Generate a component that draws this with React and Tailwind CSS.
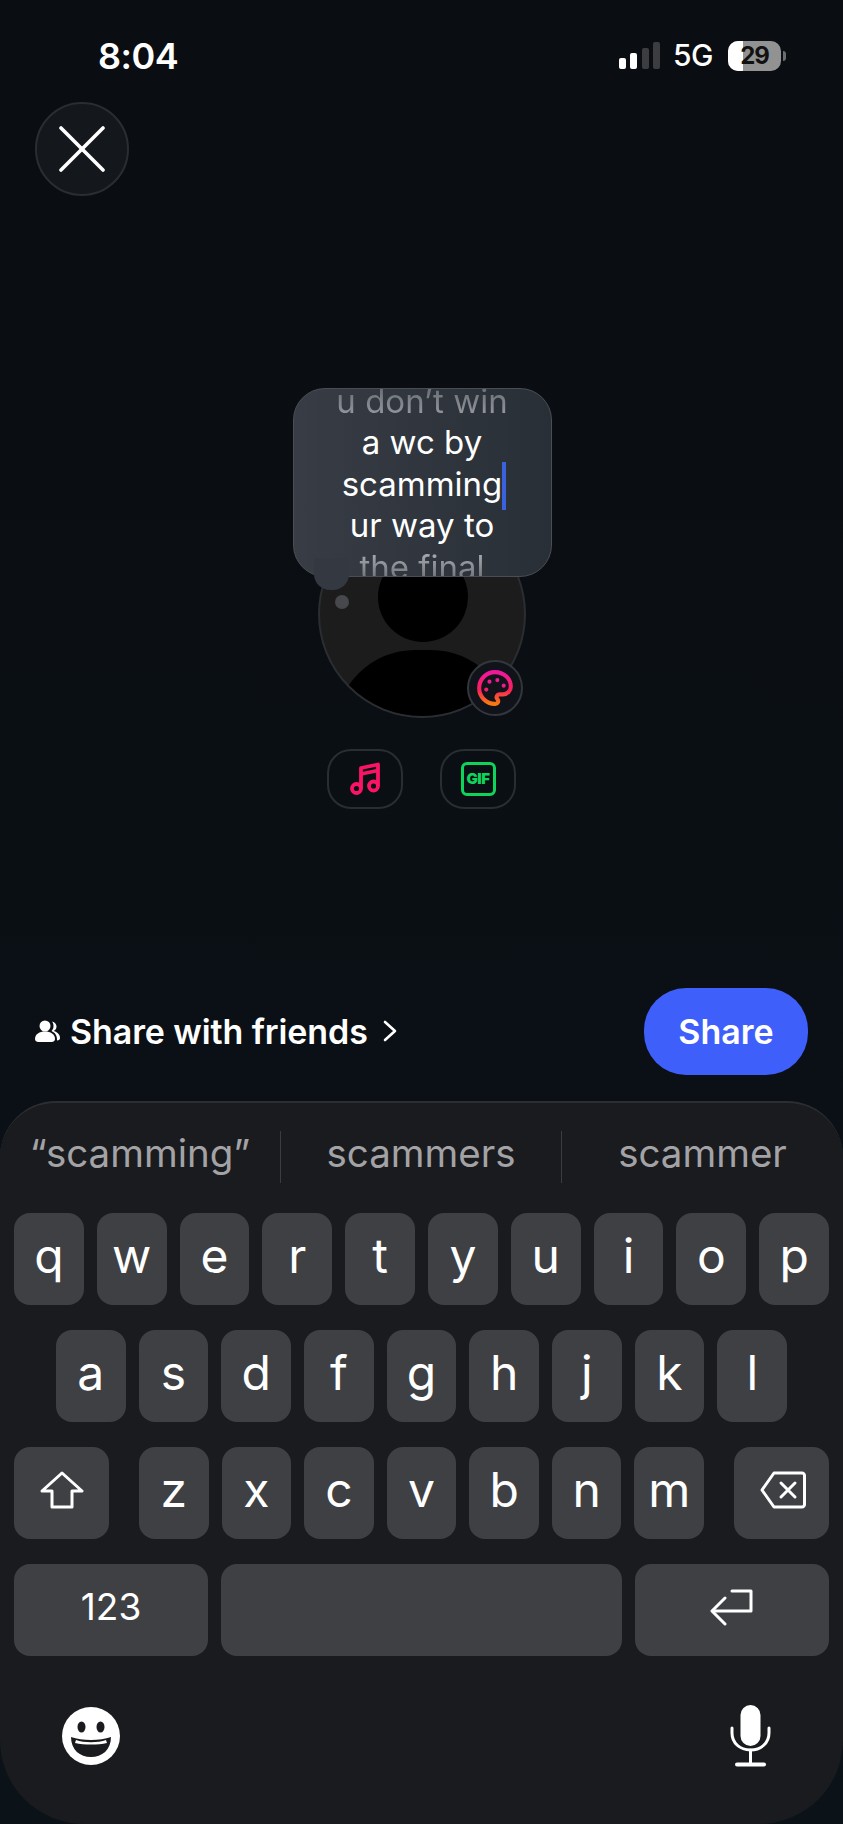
const rowOne = ["q", "w", "e", "r", "t", "y", "u", "i", "o", "p"];
const rowTwo = ["a", "s", "d", "f", "g", "h", "j", "k", "l"];
const rowThree = ["z", "x", "c", "v", "b", "n", "m"];

const Key = ({ children, className = "" }) => (
  <div
    className={`h-[92px] rounded-[16px] bg-[#3f4043] flex items-center justify-center text-white text-[48px] leading-none pb-[6px] ${className}`}
  >
    {children}
  </div>
);

const StatusBar = () => (
  <div className="h-[102px] pt-[10px] pl-[98px] pr-[57px] flex items-center justify-between text-white">
    <span className="text-[36px] font-semibold tracking-[-0.5px]">8:04</span>
    <div className="flex items-center">
      <div className="flex items-end gap-[4.5px] h-[27px]">
        <div className="w-[7px] h-[11px] rounded-[2px] bg-white" />
        <div className="w-[7px] h-[16px] rounded-[2px] bg-white" />
        <div className="w-[7px] h-[21px] rounded-[2px] bg-[#3b3d41]" />
        <div className="w-[7px] h-[27px] rounded-[2px] bg-[#3b3d41]" />
      </div>
      <span className="ml-[13px] text-[30px] font-medium tracking-[-0.5px]">5G</span>
      <div className="ml-[15px] relative w-[53px] h-[30px] rounded-[10px] overflow-hidden bg-[#929292] flex items-center justify-center">
        <div className="absolute left-0 top-0 bottom-0 w-[15px] bg-white" />
        <span className="relative text-[24px] font-bold text-[#111] tracking-[-1px]">29</span>
      </div>
      <div className="ml-[2px] w-[3px] h-[10px] rounded-r-full bg-[#6d6d6d]" />
    </div>
  </div>
);

const CloseButton = () => (
  <button className="ml-[35px] w-[94px] h-[94px] rounded-full bg-[#14171c] border-2 border-[#2a2d31] flex items-center justify-center">
    <svg width="46" height="46" viewBox="0 0 46 46" fill="none" stroke="white" strokeWidth="3.6" strokeLinecap="round">
      <path d="M2 2 L44 44" />
      <path d="M44 2 L2 44" />
    </svg>
  </button>
);

const Bubble = () => (
  <div className="absolute top-[-122px] left-[-25px] w-[259px] h-[189px]">
    <div className="relative w-full h-full pt-[4px] rounded-[32px] border border-[#4a4e54] bg-gradient-to-r from-[#383d45] to-[#292f36] overflow-hidden flex flex-col items-center justify-center text-white text-[33px] leading-[41.5px]">
      <span className="shrink-0 text-transparent bg-clip-text bg-gradient-to-b from-[#5f636a] to-[#a0a4aa]">u don’t win</span>
      <span className="shrink-0">a wc by</span>
      <span className="shrink-0 relative">
        scamming
        <span className="absolute right-[-4px] top-[-2px] w-[4px] h-[48px] bg-[#3a62dc]" />
      </span>
      <span className="shrink-0">ur way to</span>
      <span className="shrink-0 text-transparent bg-clip-text bg-gradient-to-b from-[#b4b7bb] to-[#5f636a]">the final</span>
    </div>
    {/* tail sits on top so the bubble's bottom border doesn't cut through it */}
    <div className="absolute left-[21px] bottom-[-13px] w-[35px] h-[32px] rounded-b-[16px] bg-[#343941]" />
  </div>
);

const Avatar = () => (
  <div className="relative w-[208px] h-[208px] mt-[314px]">
    <div className="w-full h-full rounded-full bg-[#1c1c1c] border-2 border-[#2a2d31] overflow-hidden relative">
      <div className="absolute left-[58px] top-[40px] w-[90px] h-[90px] rounded-full bg-black" />
      <div className="absolute left-[15px] top-[138px] w-[176px] h-[160px] rounded-full bg-black" />
    </div>
    <Bubble />
    <div className="absolute left-[17px] top-[85px] w-[14px] h-[14px] rounded-full bg-[#46484b]" />
    <div className="absolute left-[149px] top-[150px] w-[56px] h-[56px] rounded-full bg-[#10141a] border-2 border-[#33363b] flex items-center justify-center">
      <svg width="38" height="38" viewBox="0 0 24 24" fill="none" stroke="url(#paletteStroke)" strokeWidth="2.6" strokeLinecap="round" strokeLinejoin="round">
        <defs>
          <linearGradient id="paletteStroke" x1="0" y1="0" x2="0" y2="1">
            <stop offset="0" stopColor="#f0189a" />
            <stop offset="0.55" stopColor="#fb1f5c" />
            <stop offset="1" stopColor="#f97a10" />
          </linearGradient>
        </defs>
        <path d="M12 22a1 1 0 0 1 0-20 10 9 0 0 1 10 9 5 5 0 0 1-5 5h-2.25a1.75 1.75 0 0 0-1.4 2.8l.3.4a1.75 1.75 0 0 1-1.4 2.8z" />
        <circle cx="13.5" cy="7" r="1.3" fill="#ee1a90" stroke="none" />
        <circle cx="17.5" cy="10.5" r="1.3" fill="#ee1a90" stroke="none" />
        <circle cx="6.500" cy="13" r="1.3" fill="#f51c70" stroke="none" />
        <circle cx="8.500" cy="8" r="1.3" fill="#ee1a90" stroke="none" />
      </svg>
    </div>
  </div>
);

const Attachments = () => (
  <div className="mt-[31px] flex gap-[37px]">
    <div className="w-[76px] h-[60px] rounded-[24px] border-2 border-[#2a2d31] flex items-center justify-center">
      <svg width="30" height="33" viewBox="0 0 30 33" fill="none" stroke="#fb1465" strokeWidth="3.8" strokeLinejoin="round">
        <circle cx="6.500" cy="26.500" r="4.500" />
        <circle cx="23.500" cy="24" r="4.500" />
        <path d="M11 26.500 V6 L28 2.500 V24" />
        <path d="M11 12 L28 8.500" />
      </svg>
    </div>
    <div className="w-[76px] h-[60px] rounded-[24px] border-2 border-[#2a2d31] flex items-center justify-center">
      <div className="w-[35px] h-[34px] rounded-[6px] border-[3.500px] border-[#0fd45c] flex items-center justify-center text-[15px] font-black leading-none text-[#0fd45c] tracking-[-0.5px]">
        GIF
      </div>
    </div>
  </div>
);

const ShareRow = () => (
  <div className="mt-[179px] h-[87px] pl-[35px] pr-[35px] flex items-center justify-between text-white">
    <div className="flex items-center">
      <svg width="25" height="23" viewBox="0 0 25 23" fill="white">
        <circle cx="10" cy="6" r="5.5" />
        <path d="M0 19c0-5 4.500-7.500 10-7.500s10 2.500 10 7.500c0 1.800-1.500 3-3.500 3h-13C1.500 22 0 20.800 0 19z" />
        <path d="M17 1.500c3 .8 4.500 3 4.500 5s-1 3.500-3 4.500c3 .8 6.500 3 6.500 7 0 1.500-1 2.500-3 2.500 .3-5-2-8-5.500-9.500 1.500-1.500 2-3 2-5s-.5-3-1.500-4.500z" />
      </svg>
      <span className="ml-[10px] text-[34px] font-semibold tracking-[-0.1px]">Share with friends</span>
      <svg className="ml-[14px]" width="16" height="22" viewBox="0 0 16 22" fill="none" stroke="white" strokeWidth="2.6" strokeLinecap="round" strokeLinejoin="round">
        <path d="M3 2 L13 11 L3 20" />
      </svg>
    </div>
    <button className="w-[164px] h-[87px] rounded-[42px] bg-[#3f5ffb] text-[34px] font-semibold">Share</button>
  </div>
);

const Suggestions = () => (
  <div className="h-[110px] pb-[8px] flex items-center text-[38.500px] text-[#a3a3a6]">
    <div className="w-[280px] text-center">“scamming”</div>
    <div className="w-px h-[52px] mt-[6px] bg-[#3b3c40]" />
    <div className="w-[280px] text-center">scammers</div>
    <div className="w-px h-[52px] mt-[6px] bg-[#3b3c40]" />
    <div className="flex-1 text-center">scammer</div>
  </div>
);

const Keyboard = () => (
  <div className="mt-[26px] h-[724px] rounded-t-[56px] rounded-b-[84px] border-t-2 border-[#2b2f33] bg-[#1a1b1f] overflow-hidden">
    <Suggestions />
    <div className="flex flex-col gap-[25px] px-[14px]">
      <div className="flex gap-[13px]">
        {rowOne.map((k) => (
          <Key key={k} className="flex-1">{k}</Key>
        ))}
      </div>
      <div className="flex gap-[13px] px-[42px]">
        {rowTwo.map((k) => (
          <Key key={k} className="flex-1">{k}</Key>
        ))}
      </div>
      <div className="flex">
        <Key className="w-[95px]">
          <svg width="44" height="38" viewBox="0 0 44 38" fill="none" stroke="white" strokeWidth="3" strokeLinejoin="round">
            <path d="M22 2 L42 20 H32 V36 H12 V20 H2 Z" />
          </svg>
        </Key>
        <div className="flex-1 flex gap-[13px] mx-[30px]">
          {rowThree.map((k) => (
            <Key key={k} className="flex-1">{k}</Key>
          ))}
        </div>
        <Key className="w-[95px] pl-[3px]">
          <svg width="46" height="38" viewBox="0 0 46 38" fill="none" stroke="white" strokeWidth="3" strokeLinejoin="round">
            <path d="M14 2 H42 a2.500 2.500 0 0 1 2.500 2.500 V33.500 a2.500 2.500 0 0 1 -2.500 2.500 H14 L2 19 Z" />
            <path d="M21 12 L35 26 M35 12 L21 26" strokeLinecap="round" />
          </svg>
        </Key>
      </div>
      <div className="flex gap-[13px]">
        <Key className="w-[194px] !text-[37px]">123</Key>
        <Key className="flex-1" />
        <Key className="w-[194px]">
          <svg width="44" height="38" viewBox="0 0 44 38" fill="none" stroke="white" strokeWidth="3" strokeLinecap="round" strokeLinejoin="round">
            <path d="M22 3 H41 V23 H3" />
            <path d="M15 10 L2 23 L15 36" />
          </svg>
        </Key>
      </div>
    </div>
    <div className="mt-[49px] pl-[62px] pr-[72px] flex items-center justify-between">
      <svg width="58" height="58" viewBox="0 0 58 58">
        <circle cx="29" cy="29" r="29" fill="white" />
        <ellipse cx="19.500" cy="20" rx="4" ry="5.500" fill="#1a1b1f" />
        <ellipse cx="38.500" cy="20" rx="4" ry="5.500" fill="#1a1b1f" />
        <path d="M9 30 C20 34 38 34 49 30 C49 43 40 50 29 50 C18 50 9 43 9 30 Z" fill="#1a1b1f" />
        <path d="M13 36 C22 38 36 38 45 36 L44 33 C36 36 22 36 14 33 Z" fill="white" />
      </svg>
      <svg width="41" height="62" viewBox="0 0 41 62" fill="none" stroke="white" strokeWidth="3" strokeLinecap="round">
        <rect x="10.500" y="0" width="20" height="41" rx="10" fill="white" stroke="none" />
        <path d="M2 23 V28 C2 38 10 45 20.500 45 C31 45 39 38 39 28 V23" />
        <path d="M20.500 45 V59" />
        <path d="M7 59.500 H34" strokeWidth="4" />
      </svg>
    </div>
  </div>
);

export default function App() {
  return (
    <div className="w-[843px] h-[1824px] overflow-hidden flex flex-col bg-gradient-to-b from-[#0a0d12] to-[#0b1218] font-[Inter,sans-serif]">
      <StatusBar />
      <CloseButton />
      <div className="flex flex-col items-center">
        <Avatar />
        <Attachments />
      </div>
      <ShareRow />
      <Keyboard />
    </div>
  );
}
